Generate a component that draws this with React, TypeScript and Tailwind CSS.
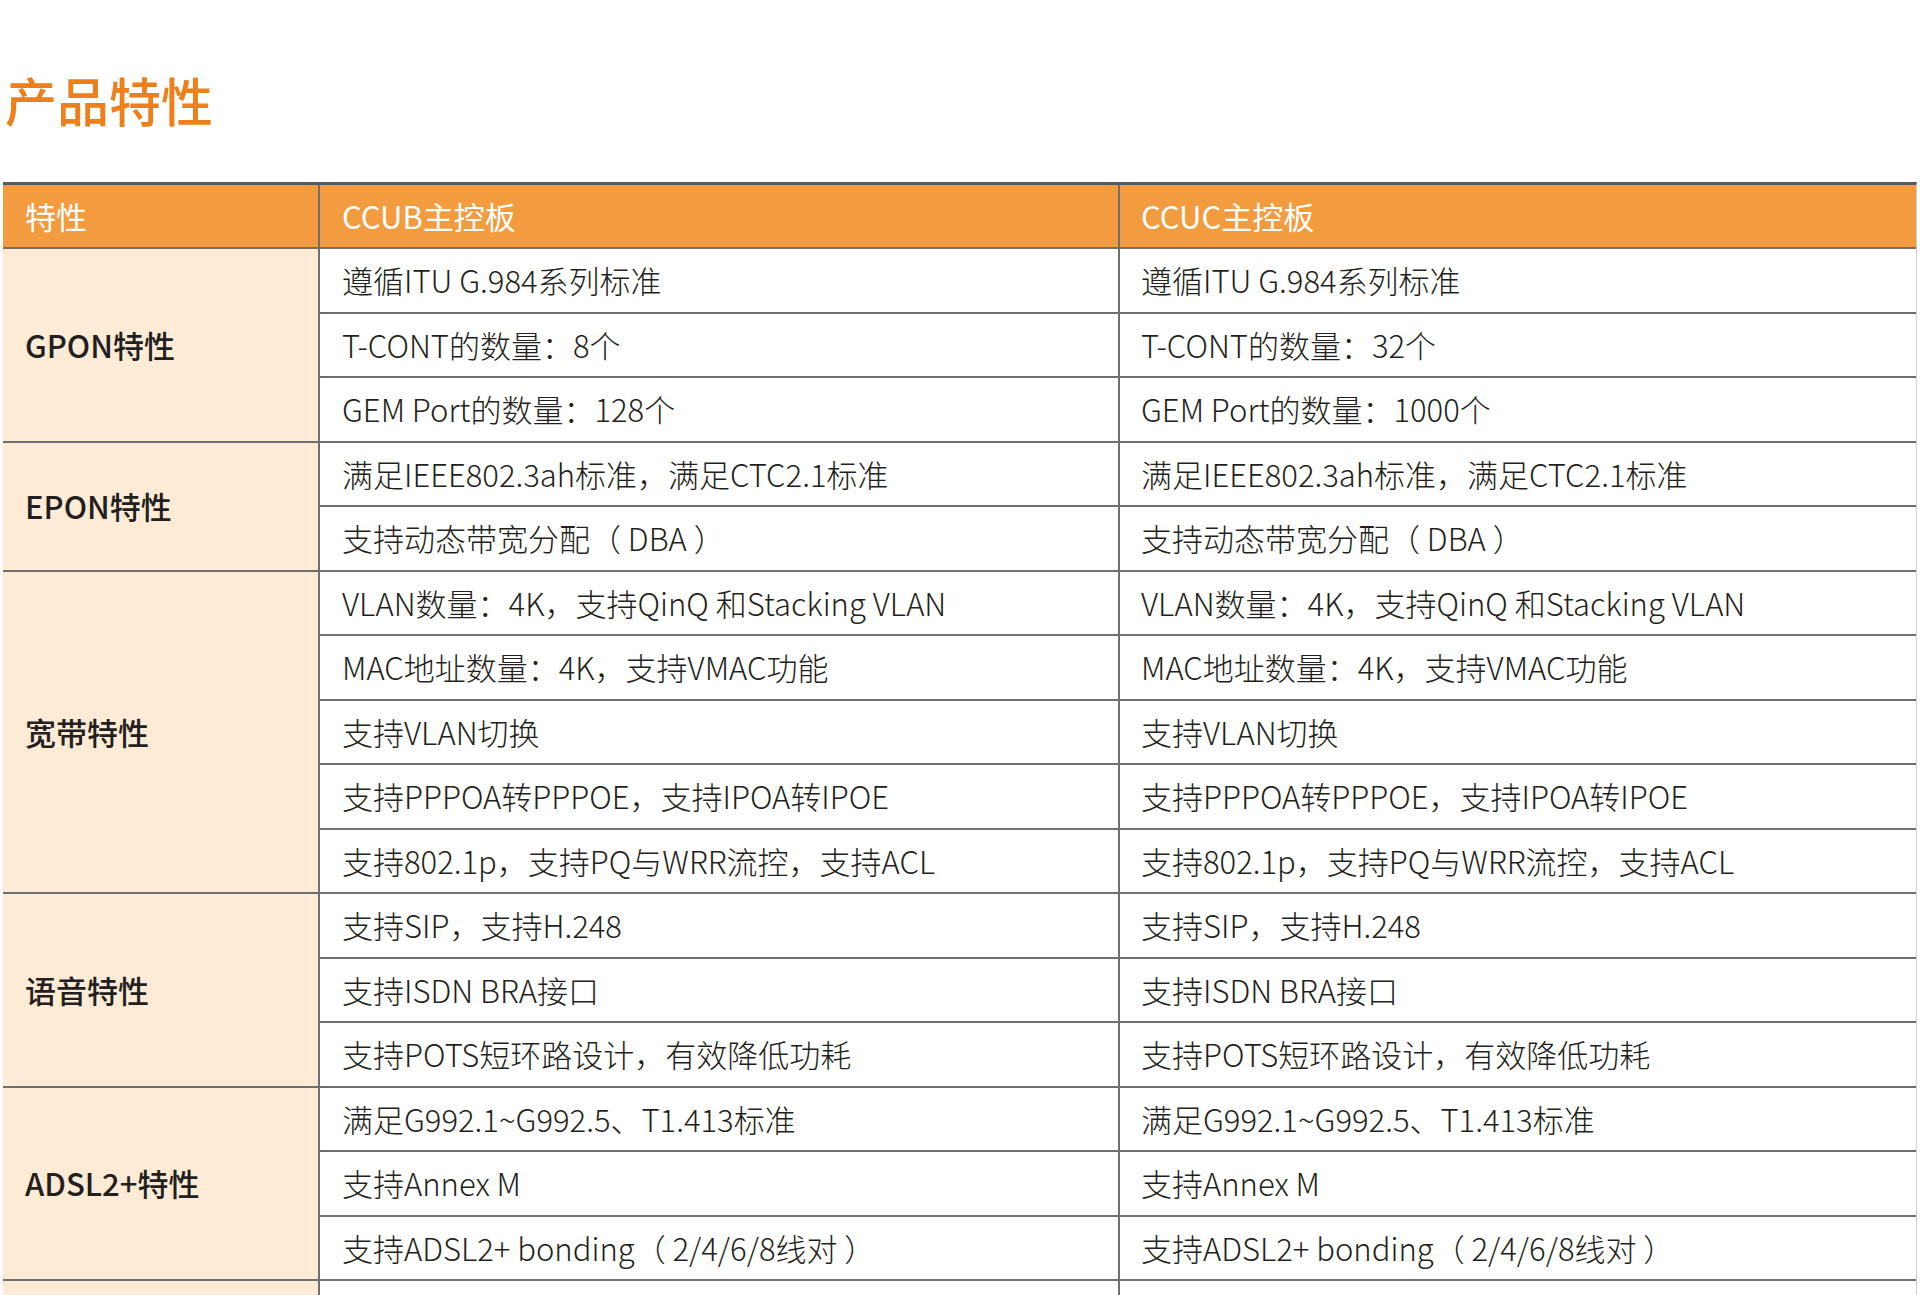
import React from 'react';

type Group = {label: string, rows: [string, string][]};

const groups: Group[] = [
    {label: 'GPON特性', rows: [
        ['遵循ITU G.984系列标准', '遵循ITU G.984系列标准'],
        ['T-CONT的数量：8个', 'T-CONT的数量：32个'],
        ['GEM Port的数量：128个', 'GEM Port的数量：1000个'],
    ]},
    {label: 'EPON特性', rows: [
        ['满足IEEE802.3ah标准，满足CTC2.1标准', '满足IEEE802.3ah标准，满足CTC2.1标准'],
        ['支持动态带宽分配（ DBA ）', '支持动态带宽分配（ DBA ）'],
    ]},
    {label: '宽带特性', rows: [
        ['VLAN数量：4K，支持QinQ 和Stacking VLAN', 'VLAN数量：4K，支持QinQ 和Stacking VLAN'],
        ['MAC地址数量：4K，支持VMAC功能', 'MAC地址数量：4K，支持VMAC功能'],
        ['支持VLAN切换', '支持VLAN切换'],
        ['支持PPPOA转PPPOE，支持IPOA转IPOE', '支持PPPOA转PPPOE，支持IPOA转IPOE'],
        ['支持802.1p，支持PQ与WRR流控，支持ACL', '支持802.1p，支持PQ与WRR流控，支持ACL'],
    ]},
    {label: '语音特性', rows: [
        ['支持SIP，支持H.248', '支持SIP，支持H.248'],
        ['支持ISDN BRA接口', '支持ISDN BRA接口'],
        ['支持POTS短环路设计，有效降低功耗', '支持POTS短环路设计，有效降低功耗'],
    ]},
    {label: 'ADSL2+特性', rows: [
        ['满足G992.1~G992.5、T1.413标准', '满足G992.1~G992.5、T1.413标准'],
        ['支持Annex M', '支持Annex M'],
        ['支持ADSL2+ bonding（ 2/4/6/8线对 ）', '支持ADSL2+ bonding（ 2/4/6/8线对 ）'],
    ]},
    {label: '', rows: [['', '']]},
];

// one feature group: label cell spans all its rows
function GroupBlock({group}: {group: Group}) {
    return <div className="flex">
        <div className="w-[317px] shrink-0 bg-[#fdebd6] border-r-2 border-b-2 border-[#6f6f6f] flex items-center pl-[22px] text-[31px] font-medium text-[#231f20]">
            {group.label}
        </div>
        <div className="flex-1 flex flex-col">
            {group.rows.map((r, i) => (
                <div key={i} className="flex h-[64.5px] border-b-2 border-[#6f6f6f] text-[31px] font-light text-[#231f20]">
                    <div className="w-[800px] shrink-0 border-r-2 border-[#6f6f6f] flex items-center pl-[22px]">{r[0]}</div>
                    <div className="flex-1 flex items-center pl-[21px]">{r[1]}</div>
                </div>
            ))}
        </div>
    </div>;
}

export default function App() {
    return <div className="w-[1920px] min-h-[1295px] bg-white overflow-hidden" style={{fontFamily: '"Noto Sans CJK SC", "Noto Sans", sans-serif'}}>
        <h1 className="pt-[68px] pl-[5px] text-[52px] leading-[64px] font-medium text-[#ee7f1b]">产品特性</h1>
        <div className="mt-[50px] ml-[3px] w-[1914px] border-t-[3px] border-[#58595b] border-r border-r-[#cfcfcf]">
            <div className="flex h-[64px] bg-[#f29c3f] border-b-2 border-[#6f6f6f] text-white text-[31px] font-normal">
                <div className="w-[317px] shrink-0 border-r-2 border-[#6f6f6f] flex items-center pl-[22px]">特性</div>
                <div className="w-[800px] shrink-0 border-r-2 border-[#6f6f6f] flex items-center pl-[22px]">CCUB主控板</div>
                <div className="flex-1 flex items-center pl-[21px]">CCUC主控板</div>
            </div>
            {groups.map((g, i) => <GroupBlock key={i} group={g} />)}
        </div>
    </div>;
}
